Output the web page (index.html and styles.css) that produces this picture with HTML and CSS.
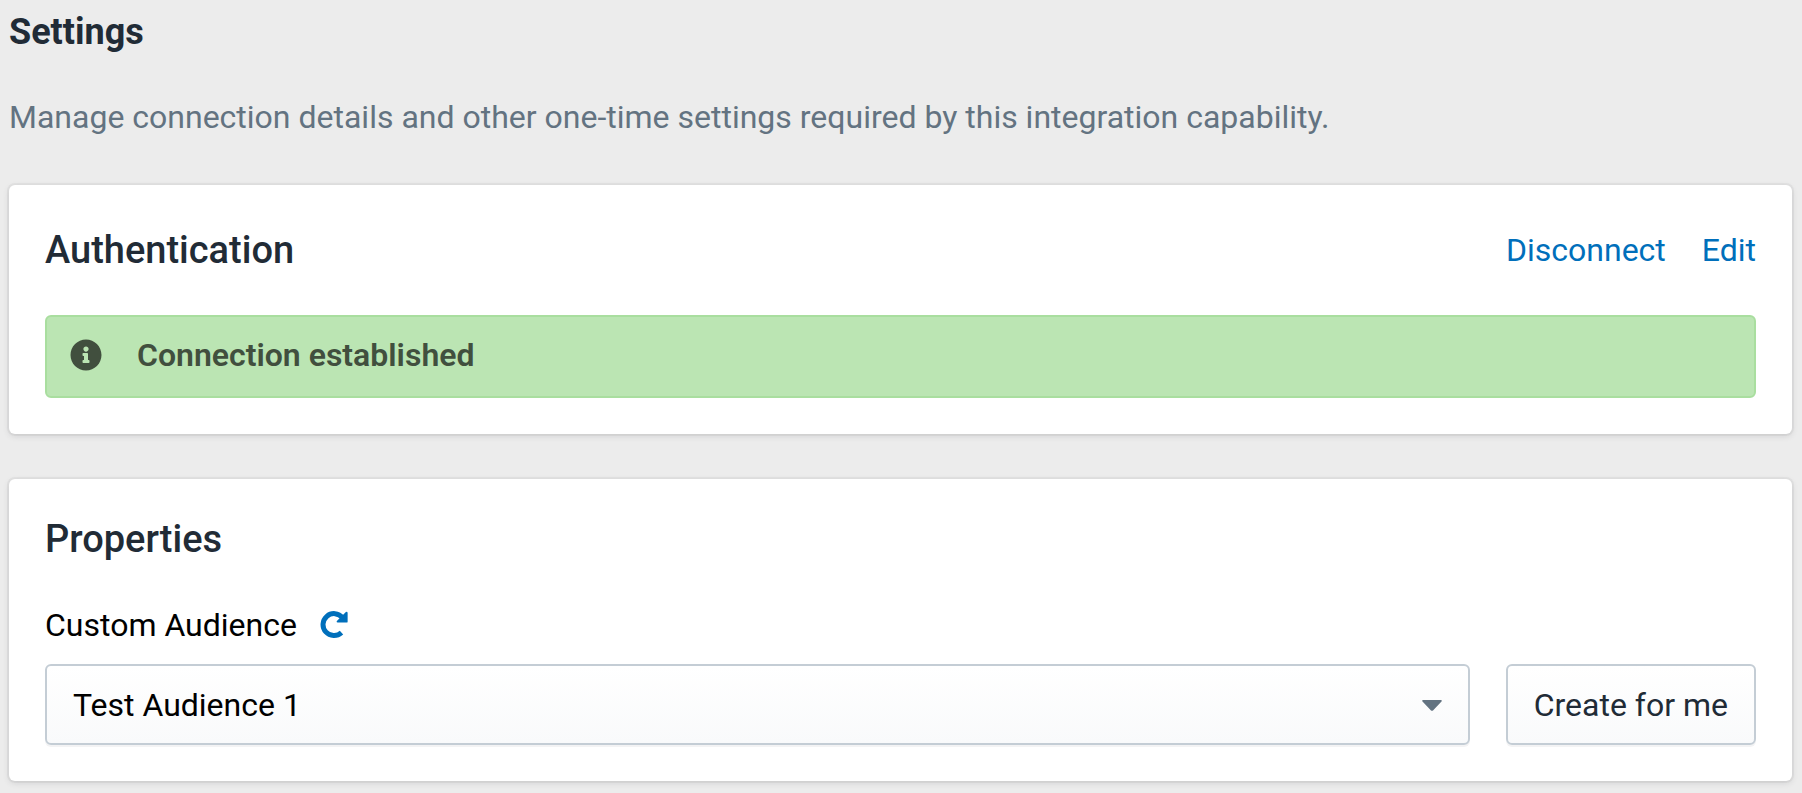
FILE: index.html
```html
<!DOCTYPE html>
<html lang="en">
<head>
    <meta charset="UTF-8">
    <meta name="viewport" content="width=device-width, initial-scale=1.0">
    <title>Settings</title>
    <link rel="stylesheet" href="styles.css">
</head>
<body>
    <main class="settings">
        <h1>Settings</h1>
        <p class="description">Manage connection details and other one-time settings required by this integration capability.</p>
        <section class="card">
            <div class="card-header">
                <h2>Authentication</h2>
                <nav class="links">
                    <a href="#disconnect">Disconnect</a>
                    <a href="#edit">Edit</a>
                </nav>
            </div>
            <div class="alert" role="status">
                <svg class="info-icon" viewBox="0 0 512 512" aria-hidden="true">
                    <path fill="currentColor" d="M256 8C119.043 8 8 119.083 8 256c0 136.997 111.043 248 248 248s248-111.003 248-248C504 119.083 392.957 8 256 8zm0 110c23.196 0 42 18.804 42 42s-18.804 42-42 42-42-18.804-42-42 18.804-42 42-42zm56 254c0 6.627-5.373 12-12 12h-88c-6.627 0-12-5.373-12-12v-24c0-6.627 5.373-12 12-12h12v-64h-12c-6.627 0-12-5.373-12-12v-24c0-6.627 5.373-12 12-12h64c6.627 0 12 5.373 12 12v100h12c6.627 0 12 5.373 12 12v24z"/>
                </svg>
                <strong>Connection established</strong>
            </div>
        </section>
        <section class="card">
            <h2>Properties</h2>
            <div class="field-label">
                <label for="audience">Custom Audience</label>
                <button class="refresh" type="button" aria-label="Refresh">
                    <svg viewBox="0 0 28 28" aria-hidden="true">
                        <path fill="none" stroke="currentColor" stroke-width="5" d="M22.500 6.600A11 11 0 1 0 21.500 21.700"/>
                        <path fill="currentColor" d="M27.600 1.700v9q0 .9-.9.900h-9.200q-1.600-.2-.6-1.500l9-9q1.300-1 1.700.6z"/>
                    </svg>
                </button>
            </div>
            <div class="field">
                <div class="select">
                    <select id="audience">
                        <option>Test Audience 1</option>
                    </select>
                    <svg class="caret" viewBox="0 0 20 12" aria-hidden="true">
                        <path fill="currentColor" d="M1.200 0h17.600c.9 0 1.300 1 .7 1.600l-8.500 8.800c-.6.600-1.400.600-2 0l-8.500-8.800c-.6-.600-.2-1.600.7-1.600z"/>
                    </svg>
                </div>
                <button class="create" type="button">Create for me</button>
            </div>
        </section>
    </main>
</body>
</html>
```

FILE: styles.css
```css
* {
    margin: 0;
    padding: 0;
    box-sizing: border-box;
}
body {
    background-color: #ececec;
    color: #212b36;
    font-family: Roboto, sans-serif;
    font-size: 32px;
    line-height: 40px;
}
button,
select {
    font: inherit;
    cursor: pointer;
}
.settings {
    padding: 12px 10px 12px 9px;
}
h1 {
    font-size: 36px;
    font-weight: 700;
}
.description {
    margin: 45px 0 48px;
    color: #637381;
}
.card {
    margin-bottom: 45px;
    padding: 45px 36px 36px;
    border-radius: 6px;
    background-color: #fff;
    box-shadow: 0 0 0 2px rgba(63, 63, 68, 0.05), 0 2px 6px rgba(63, 63, 68, 0.15);
}
.card:last-child {
    margin-bottom: 0;
    padding-top: 40px;
}
.card-header {
    display: flex;
    justify-content: space-between;
    align-items: center;
    margin-bottom: 45px;
}
h2 {
    font-size: 38px;
    font-weight: 500;
}
.links {
    display: flex;
    gap: 36px;
}
.links a {
    color: #006fbb;
    text-decoration: none;
}
.alert {
    display: flex;
    align-items: center;
    gap: 35px;
    height: 83px;
    padding: 0 23px 3px;
    border: 2px solid #a9de9f;
    border-radius: 6px;
    background-color: #bbe5b3;
    color: #414f3e;
}
.alert strong {
    font-weight: 600;
}
.info-icon {
    width: 32px;
    height: 32px;
}
.field-label {
    display: flex;
    align-items: center;
    gap: 23px;
    margin: 46px 0 19px;
    color: #000;
}
.refresh {
    display: flex;
    border: none;
    background: none;
    color: #006fbb;
}
.refresh svg {
    width: 28px;
    height: 28px;
}
.field {
    display: flex;
    gap: 36px;
}
.select {
    position: relative;
    flex: 1;
}
.select select,
.create {
    height: 81px;
    padding: 0 26px;
    border: 2px solid #c4cdd5;
    border-radius: 6px;
    background: linear-gradient(to bottom, #fff, #f9fafb);
    box-shadow: 0 2px 0 rgba(22, 29, 37, 0.05);
}
.select select {
    display: block;
    width: 100%;
    appearance: none;
    color: #000;
}
.caret {
    position: absolute;
    top: 36px;
    right: 28px;
    width: 20px;
    height: 12px;
    color: #637381;
    pointer-events: none;
}
.create {
    color: #212b36;
}
```
